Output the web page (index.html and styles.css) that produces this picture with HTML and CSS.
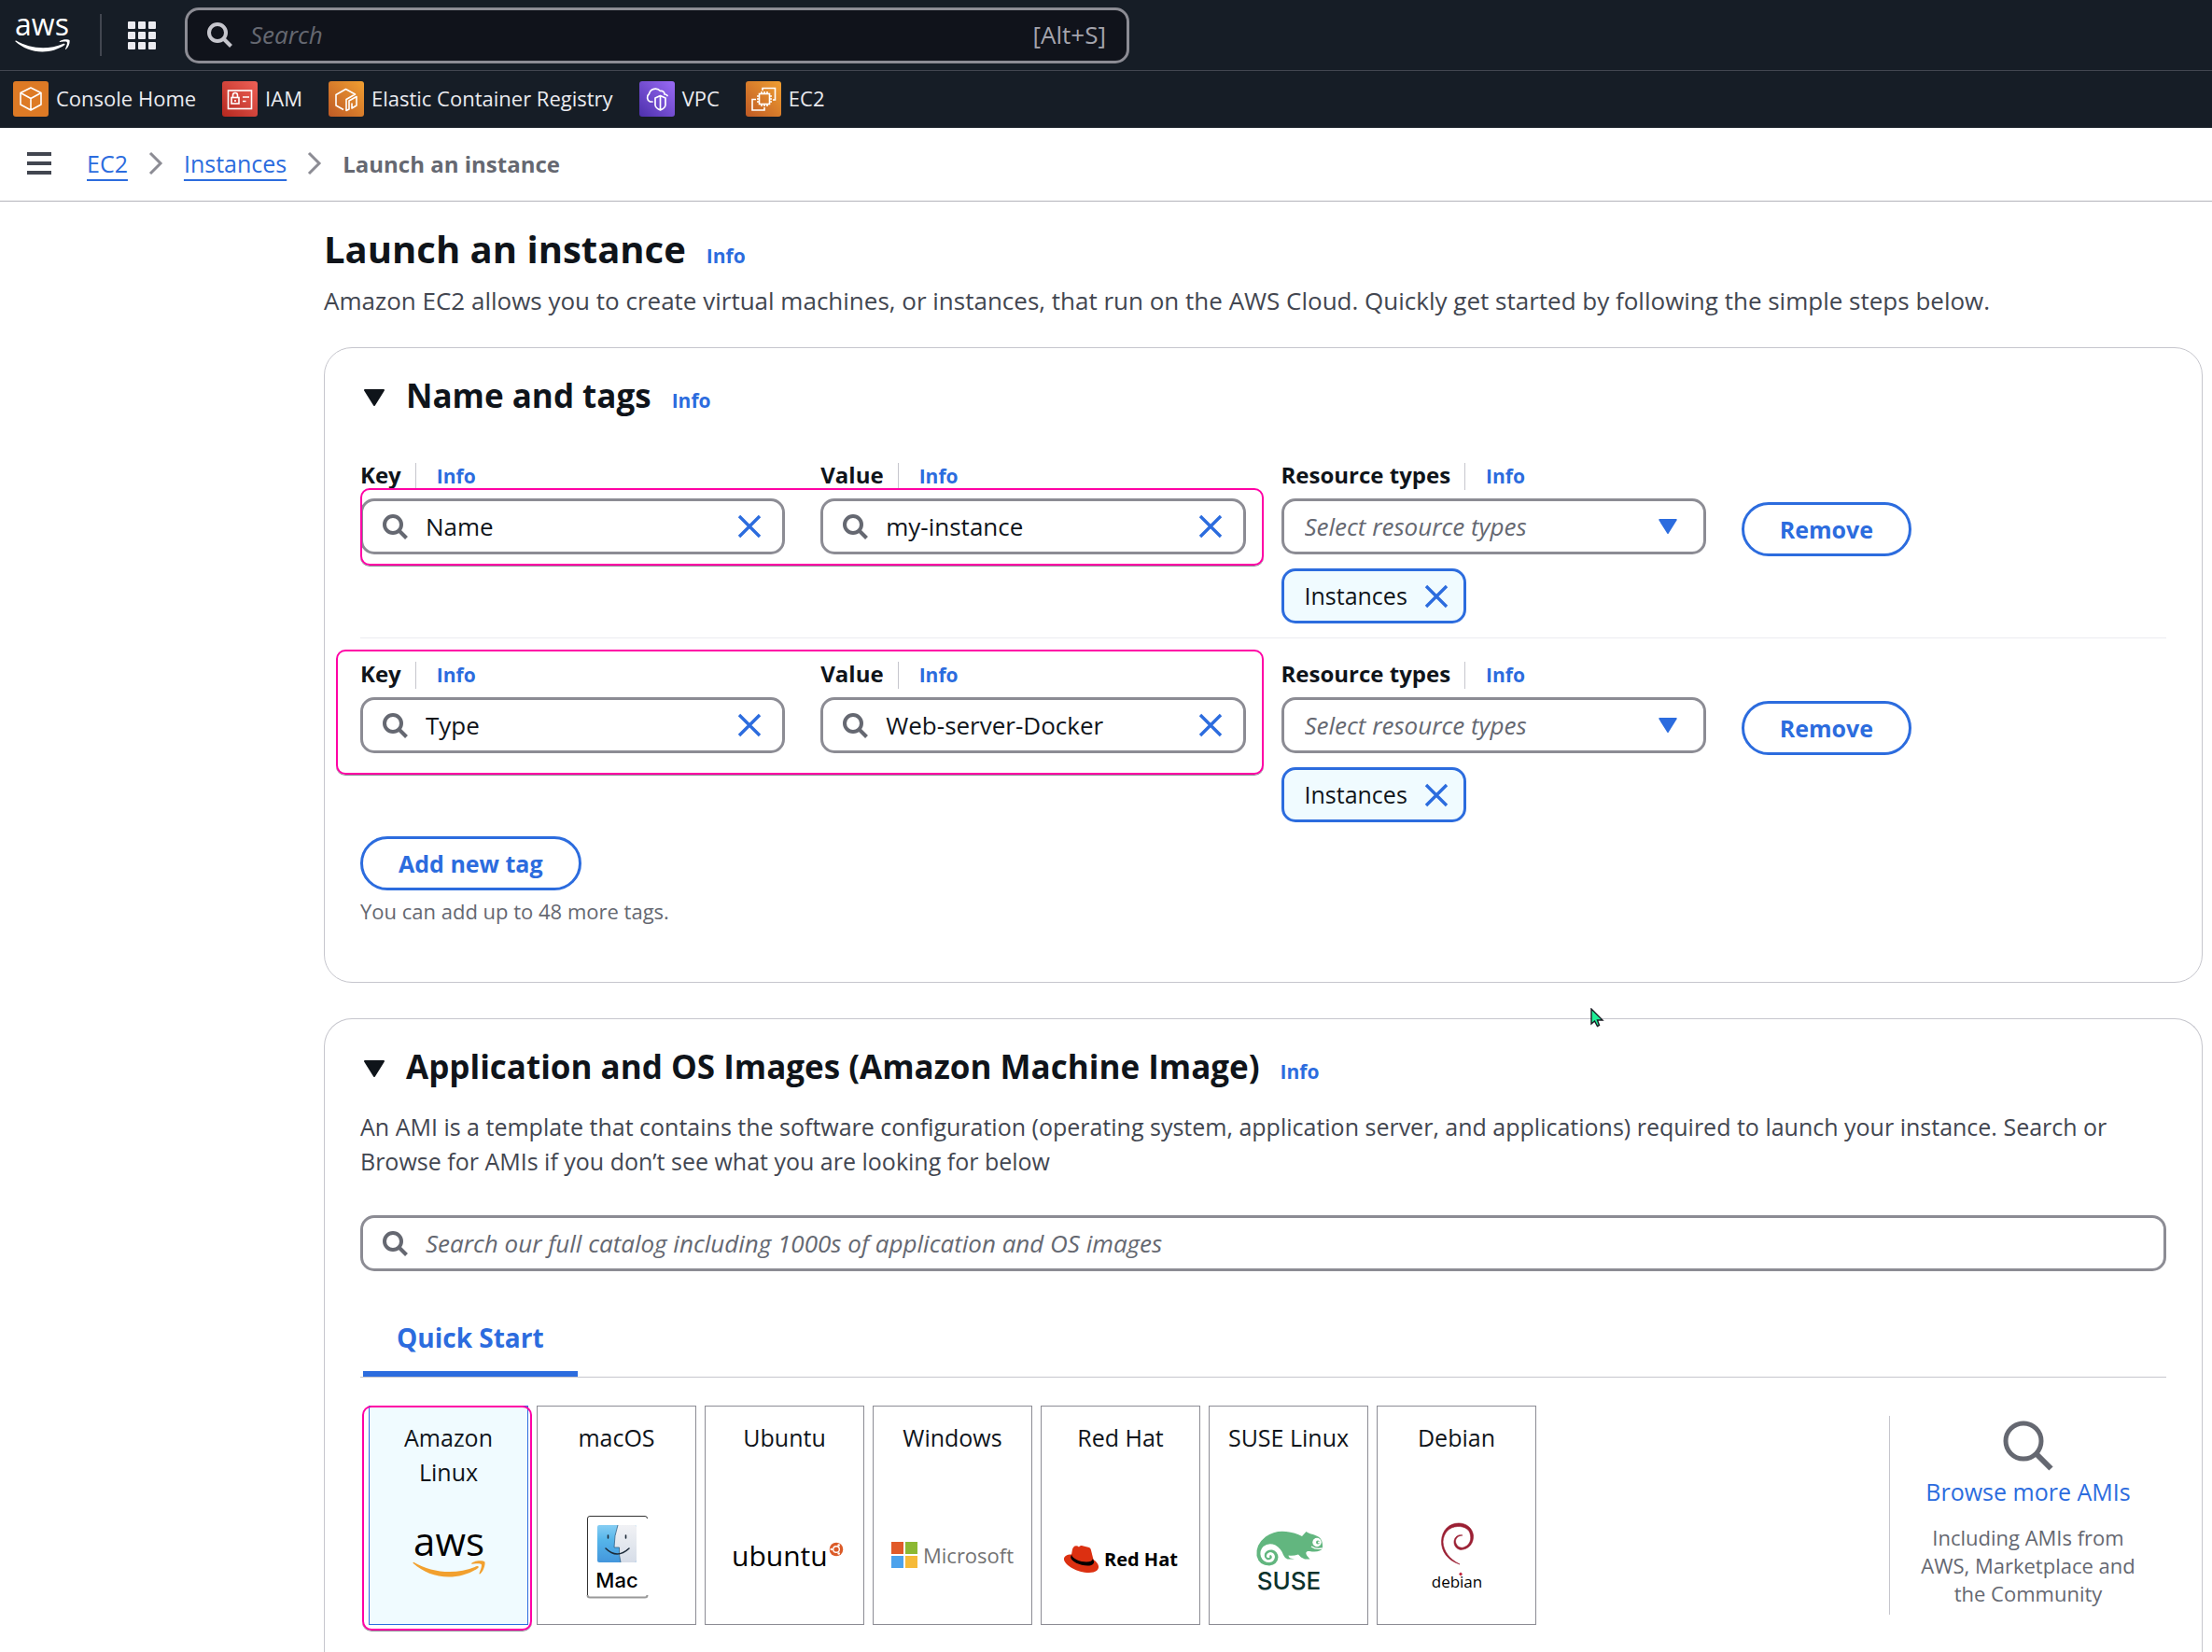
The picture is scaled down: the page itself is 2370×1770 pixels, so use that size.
FILE: index.html
```html
<!DOCTYPE html>
<html lang="en">
<head>
<meta charset="utf-8">
<meta name="viewport" content="width=device-width, initial-scale=1">
<title>Launch an instance | EC2</title>
<link rel="stylesheet" href="styles.css">
</head>
<body>
<svg class="sprite" aria-hidden="true">
  <symbol id="search" viewBox="0 0 27 27"><circle cx="11" cy="11" r="9" fill="none" stroke="currentColor" stroke-width="4"/><path d="M17.500 17.500 25.500 25.500" stroke="currentColor" stroke-width="4"/></symbol>
  <symbol id="search-large" viewBox="0 0 54 54"><circle cx="22" cy="22" r="19" fill="none" stroke="currentColor" stroke-width="5"/><path d="M35.500 35.500 51.500 51.500" stroke="currentColor" stroke-width="6"/></symbol>
  <symbol id="close" viewBox="0 0 26 26"><path d="M2 2 24 24M24 2 2 24" stroke="currentColor" stroke-width="3.400"/></symbol>
  <symbol id="caret" viewBox="0 0 24 18"><path d="M2 1H22L12 17Z" fill="currentColor" stroke="currentColor" stroke-width="2" stroke-linejoin="round"/></symbol>
  <symbol id="chevron" viewBox="0 0 16 26"><path d="M2 2 13 13 2 24" fill="none" stroke="currentColor" stroke-width="3"/></symbol>
  <symbol id="smile" viewBox="0 0 304 182">
    <path d="M273.500 143.700c-32.900 24.300-80.700 37.200-121.800 37.200-57.600 0-109.500-21.300-148.700-56.700-3.100-2.800-.3-6.600 3.400-4.400 42.400 24.600 94.700 39.500 148.800 39.500 36.500 0 76.600-7.600 113.500-23.200 5.500-2.500 10.200 3.600 4.800 7.600z"/>
    <path d="M287.200 128.100c-4.200-5.400-27.800-2.600-38.500-1.300-3.200.4-3.700-2.400-.8-4.500 18.800-13.200 49.700-9.400 53.300-5 3.600 4.500-1 35.400-18.600 50.200-2.700 2.300-5.300 1.100-4.100-1.900 4-9.900 12.900-32.200 8.700-37.500z"/>
  </symbol>
</svg>

<header class="topbar">
  <a class="home" href="#" aria-label="AWS home"><svg width="60" height="50" viewBox="0 0 60 50" fill="#fff"><text class="word-aws-small" x="29" y="32" text-anchor="middle">aws</text><use href="#smile" y="14" width="59" height="36"/></svg></a>
  <button class="services" type="button" aria-label="Services">
    <svg width="30" height="30" viewBox="0 0 30 30" fill="#ebebf0"><rect width="8" height="8" rx="1"/><rect x="11" width="8" height="8" rx="1"/><rect x="22" width="8" height="8" rx="1"/><rect y="11" width="8" height="8" rx="1"/><rect x="11" y="11" width="8" height="8" rx="1"/><rect x="22" y="11" width="8" height="8" rx="1"/><rect y="22" width="8" height="8" rx="1"/><rect x="11" y="22" width="8" height="8" rx="1"/><rect x="22" y="22" width="8" height="8" rx="1"/></svg>
  </button>
  <label class="field field-dark">
    <svg class="icon" width="27" height="27"><use href="#search"/></svg>
    <input type="search" placeholder="Search" aria-label="Search">
    <span class="shortcut">[Alt+S]</span>
  </label>
</header>

<nav class="favorites" aria-label="Favorites">
  <a href="#">
    <svg width="38" height="38" viewBox="0 0 38 38"><rect width="38" height="38" rx="3" fill="#dd7a25"/><path d="M19 7 30 12.500V25L19 31 8 25V12.500ZM8 12.500 19 18.500 30 12.500M19 18.500V31" fill="none" stroke="#fff" stroke-width="1.600" stroke-linejoin="round"/></svg>
    Console Home</a>
  <a href="#">
    <svg width="38" height="38" viewBox="0 0 38 38"><defs><linearGradient id="g-iam" x1="0" y1="1" x2="1" y2="0"><stop stop-color="#b5281f"/><stop offset="1" stop-color="#ee6157"/></linearGradient></defs><rect width="38" height="38" rx="3" fill="url(#g-iam)"/><g fill="none" stroke="#fff" stroke-width="1.600"><rect x="6.500" y="10" width="25" height="19.500"/><rect x="10" y="17.500" width="8" height="6.500"/><path d="M11.500 17.500V15a2.500 2.500 0 0 1 5 0v2.500M22 17h7M22 21.500h3.500M14 20v2"/></g></svg>
    IAM</a>
  <a href="#">
    <svg width="38" height="38" viewBox="0 0 38 38"><defs><linearGradient id="g-orange" x1="0" y1="1" x2="1" y2="0"><stop stop-color="#bf5a25"/><stop offset="1" stop-color="#f09f31"/></linearGradient></defs><rect width="38" height="38" rx="3" fill="url(#g-orange)"/><g fill="none" stroke="#fff" stroke-width="1.600" stroke-linejoin="round"><path d="M16 30.500 8 26V14.500L18.500 8.500 28.500 14 19 19.500V31.500L22 30V21L30 16.500V26L25 29V23.500"/></g></svg>
    Elastic Container Registry</a>
  <a href="#">
    <svg width="38" height="38" viewBox="0 0 38 38"><defs><linearGradient id="g-vpc" x1="0" y1="1" x2="1" y2="0"><stop stop-color="#4d30ac"/><stop offset="1" stop-color="#9a6bf5"/></linearGradient></defs><rect width="38" height="38" rx="3" fill="url(#g-vpc)"/><g fill="none" stroke="#fff" stroke-width="1.700" stroke-linecap="round" stroke-linejoin="round"><path d="M14 22H11.500A5 5 0 0 1 10.500 13.500 7 7 0 0 1 22.500 10.500 3.500 3.500 0 0 1 27 14Q29 14 30 15.500"/><path d="M22.500 15.500 28 18V25.500Q27.500 29 22.500 31 17.500 29 17 25.500V18ZM22.500 15.500V31"/></g></svg>
    VPC</a>
  <a href="#">
    <svg width="38" height="38" viewBox="0 0 38 38"><rect width="38" height="38" rx="3" fill="url(#g-orange)"/><g fill="none" stroke="#fff" stroke-width="1.600"><rect x="14.500" y="13.500" width="11" height="11"/><path d="M17 13.500V11M20 13.500V11M23 13.500V11M17 24.500V27M20 24.500V27M23 24.500V27M14.500 16H12M14.500 19H12M14.500 22H12M25.500 16H28M25.500 19H28M25.500 22H28"/><path d="M18 10V7.500H31.500V20H29M11 19.500H7V31H20V28"/></g></svg>
    EC2</a>
</nav>

<nav class="crumbs" aria-label="Breadcrumb">
  <button class="menu" type="button" aria-label="Open navigation"><svg width="26" height="24" viewBox="0 0 26 24"><path d="M0 2H26M0 12H26M0 22H26" stroke="#424650" stroke-width="4"/></svg></button>
  <a href="#">EC2</a>
  <svg class="sep" width="16" height="26"><use href="#chevron"/></svg>
  <a href="#">Instances</a>
  <svg class="sep" width="16" height="26"><use href="#chevron"/></svg>
  <b>Launch an instance</b>
</nav>

<main>
  <div class="title"><h1>Launch an instance</h1><a class="info" href="#">Info</a></div>
  <p class="lead">Amazon EC2 allows you to create virtual machines, or instances, that run on the AWS Cloud. Quickly get started by following the simple steps below.</p>

  <section class="card">
    <div class="title">
      <button class="toggle" type="button" aria-label="Collapse name and tags"><svg width="24" height="18"><use href="#caret"/></svg></button>
      <h2>Name and tags</h2><a class="info" href="#">Info</a>
    </div>

    <div class="tag-row">
      <div class="cell">
        <div class="label"><label for="key-1">Key</label><a class="info" href="#">Info</a></div>
        <div class="field"><svg class="icon" width="27" height="27"><use href="#search"/></svg><input id="key-1" value="Name"><button type="button" aria-label="Clear key"><svg width="26" height="26"><use href="#close"/></svg></button></div>
      </div>
      <div class="cell">
        <div class="label"><label for="value-1">Value</label><a class="info" href="#">Info</a></div>
        <div class="field"><svg class="icon" width="27" height="27"><use href="#search"/></svg><input id="value-1" value="my-instance"><button type="button" aria-label="Clear value"><svg width="26" height="26"><use href="#close"/></svg></button></div>
      </div>
      <div class="cell">
        <div class="label"><label for="types-1">Resource types</label><a class="info" href="#">Info</a></div>
        <div class="field field-select"><select id="types-1"><option>Select resource types</option></select><svg class="caret" width="22" height="16"><use href="#caret"/></svg></div>
        <div class="token">Instances<button type="button" aria-label="Remove Instances"><svg width="26" height="26"><use href="#close"/></svg></button></div>
      </div>
      <div class="cell cell-action"><button class="button" type="button">Remove</button></div>
      <div class="mark mark-fields"></div>
    </div>

    <div class="tag-row">
      <div class="cell">
        <div class="label"><label for="key-2">Key</label><a class="info" href="#">Info</a></div>
        <div class="field"><svg class="icon" width="27" height="27"><use href="#search"/></svg><input id="key-2" value="Type"><button type="button" aria-label="Clear key"><svg width="26" height="26"><use href="#close"/></svg></button></div>
      </div>
      <div class="cell">
        <div class="label"><label for="value-2">Value</label><a class="info" href="#">Info</a></div>
        <div class="field"><svg class="icon" width="27" height="27"><use href="#search"/></svg><input id="value-2" value="Web-server-Docker"><button type="button" aria-label="Clear value"><svg width="26" height="26"><use href="#close"/></svg></button></div>
      </div>
      <div class="cell">
        <div class="label"><label for="types-2">Resource types</label><a class="info" href="#">Info</a></div>
        <div class="field field-select"><select id="types-2"><option>Select resource types</option></select><svg class="caret" width="22" height="16"><use href="#caret"/></svg></div>
        <div class="token">Instances<button type="button" aria-label="Remove Instances"><svg width="26" height="26"><use href="#close"/></svg></button></div>
      </div>
      <div class="cell cell-action"><button class="button" type="button">Remove</button></div>
      <div class="mark mark-row"></div>
    </div>

    <button class="button" type="button">Add new tag</button>
    <p class="hint">You can add up to 48 more tags.</p>
  </section>

  <section class="card card-open">
    <div class="title">
      <button class="toggle" type="button" aria-label="Collapse images"><svg width="24" height="18"><use href="#caret"/></svg></button>
      <h2>Application and OS Images (Amazon Machine Image)</h2><a class="info" href="#">Info</a>
    </div>
    <p class="about">An AMI is a template that contains the software configuration (operating system, application server, and applications) required to launch your instance. Search or Browse for AMIs if you don’t see what you are looking for below</p>
    <label class="field">
      <svg class="icon" width="27" height="27"><use href="#search"/></svg>
      <input type="search" placeholder="Search our full catalog including 1000s of application and OS images" aria-label="Search images">
    </label>
    <div class="tabs" role="tablist"><button class="tab" type="button" role="tab" aria-selected="true">Quick Start</button></div>

    <div class="images">
      <div class="tiles">
        <button class="tile tile-selected" type="button"><span>Amazon Linux</span>
          <svg class="logo" width="140" height="100" viewBox="0 0 140 100"><text class="word-aws" x="70" y="50" text-anchor="middle">aws</text><use href="#smile" x="31" y="26" width="78" height="47" fill="#f2a02e"/></svg>
          <i class="mark mark-tile"></i>
        </button>
        <button class="tile" type="button"><span>macOS</span>
          <svg class="logo" width="140" height="100" viewBox="0 0 140 100">
            <defs><linearGradient id="g-face" x1="0" y1="0" x2="0" y2="1"><stop stop-color="#86cdf3"/><stop offset=".4" stop-color="#55b5ea"/><stop offset="1" stop-color="#4396dc"/></linearGradient><linearGradient id="g-side" x1="0" y1="0" x2="0" y2="1"><stop stop-color="#f1f2f5"/><stop offset="1" stop-color="#d6dde8"/></linearGradient></defs>
            <path d="M102.500 10Q102.500 7.500 100 7.500H41Q38.500 7.500 38.500 10V92" fill="none" stroke="#333" stroke-width="1"/>
            <path d="M38.500 92Q38.500 94.500 41 94.500H100Q102.500 94.500 102.500 92" fill="none" stroke="#999" stroke-width="2"/>
            <rect x="49" y="17" width="42" height="40" rx="2" fill="url(#g-face)"/>
            <path d="M71 17H89Q91 17 91 19V55Q91 57 89 57H74Q72 50 72.500 41H67Q67 28 71 17Z" fill="url(#g-side)"/>
            <path d="M71 17Q67 28 67 41H72.500Q72 50 74 57" fill="none" stroke="#2b5f86" stroke-width=".8"/>
            <path d="M60.500 28V31M79.500 28V31M58 42Q70 54 83 42" fill="none" stroke="#1c2a38" stroke-width="1.600" stroke-linecap="round"/>
            <text class="word-mac" x="70" y="84" text-anchor="middle">Mac</text>
          </svg>
        </button>
        <button class="tile" type="button"><span>Ubuntu</span>
          <svg class="logo" width="140" height="100" viewBox="0 0 140 100">
            <text class="word-ubuntu" x="13" y="61">ubuntu</text>
            <circle cx="125" cy="43" r="7.300" fill="#db5b28"/><circle cx="125" cy="43" r="3.300" fill="none" stroke="#fff" stroke-width="1.400"/><g fill="#fff"><circle cx="119.800" cy="43" r="1.300"/><circle cx="127.700" cy="38.500" r="1.300"/><circle cx="127.700" cy="47.500" r="1.300"/></g>
          </svg>
        </button>
        <button class="tile" type="button"><span>Windows</span>
          <svg class="logo" width="140" height="100" viewBox="0 0 140 100">
            <path d="M4 35h13v13H4z" fill="#e15a29"/><path d="M19 35h13v13H19z" fill="#8cb832"/><path d="M4 50h13v13H4z" fill="#4ca2ec"/><path d="M19 50h13v13H19z" fill="#f6ba38"/>
            <text class="word-microsoft" x="38" y="58">Microsoft</text>
          </svg>
        </button>
        <button class="tile" type="button"><span>Red Hat</span>
          <svg class="logo" width="140" height="100" viewBox="0 0 140 100">
            <path d="M17 48.500C12 48.500 8.500 50.500 9 54 10 60 23 68 36 68 43 68 46.500 65 46 61 45.500 58 43.500 56 40.500 54L38 44C37.500 41.500 36.500 41 34 40.500L28 39Q26 38.500 25 40.500 23 38.500 20.500 39.500 18.500 40.500 18 43Z" fill="#dc3011"/>
            <path d="M17 48.500 16.200 51.500C16.500 56 26 60.500 34.500 60.500 39 60.500 41.500 58.500 41 56L40 53C39.500 55.500 37 56.500 33 56.500 26 56.500 18 53 17 48.500Z" fill="#000"/>
            <text class="word-redhat" x="52" y="61">Red Hat</text>
          </svg>
        </button>
        <button class="tile" type="button"><span>SUSE Linux</span>
          <svg class="logo" width="140" height="100" viewBox="0 0 140 100">
            <path d="M88.500 24C91 26.500 98 27 101.500 29.500 105.500 32 106.500 37 106 42 104.500 45 99 46.500 92 45 88 44.500 87.500 47 89.500 50L92.500 53.500H87L83 51.500 80 48.500Q74 50.500 69.500 49.500 69.500 51.500 71.500 52.500L76 53.500H68.500Q65.500 52.500 64 49 61.500 42 55.500 38.500 48 35.500 42.500 40 38 44.500 40 51 42.500 57 49 57 54.500 56.500 55 51 54.500 46.500 50 46 45.500 47 46 51 47.500 53 49.500 51.500 48.500 49.500 50 49 52.500 50 51.500 52.500 49.500 55 46.500 54 43 52 44 47.500 46.500 43 52 43.500 58 45 58.500 51.500 58 59 49 60.500 38 60.500 35.500 50 34 38 45 29.500 55 22.500 67 24 77 25 84 29 87.500 30Q87.500 27 88.500 24Z" fill="#62b67f"/>
            <circle cx="100" cy="35.500" r="4.700" fill="#fff"/><circle cx="101" cy="35.500" r="2" fill="#62b67f"/><circle cx="102" cy="35.500" r="1" fill="#fff"/><path d="M94 40Q99 43.500 106 42" fill="none" stroke="#fff" stroke-width="1.300"/>
            <text class="word-suse" x="70" y="86" text-anchor="middle">SUSE</text>
          </svg>
        </button>
        <button class="tile" type="button"><span>Debian</span>
          <svg class="logo" width="140" height="100" viewBox="0 0 140 100">
            <path d="M73 59C60 55 53 45 53.500 34 54 22 62 15 72 15 80 15 86.500 20 87.500 28 88 37 82.500 43 74 43.500 69 42.500 66.500 38.500 67 34 68 29 71.500 27 76 28 71.500 28.500 68.500 30.500 68.500 35 69.500 39.500 73 42 77 41 83 39 85.500 34 84.500 28 83.500 21 78 18.500 71 18.500 61 19 55.500 26 55 35 55.500 45 62 53.500 73 59Z" fill="#9b1f33" stroke="#9b1f33" stroke-width=".6"/>
            <text class="word-debian" x="70" y="84" text-anchor="middle">debian</text>
            <path d="M74 67.500 76 69.500 74 71.500 72 69.500Z" fill="#c0203a"/>
          </svg>
        </button>
      </div>
      <aside class="browse">
        <svg width="54" height="54"><use href="#search-large"/></svg>
        <a href="#">Browse more AMIs</a>
        <p>Including AMIs from AWS, Marketplace and the Community</p>
      </aside>
    </div>
  </section>

  <svg class="cursor" width="15" height="21" viewBox="0 0 15 21" aria-hidden="true"><path d="M1 1V17L4.500 14 7.500 19.500 9.500 18.500 7.500 13H13Z" fill="#1fee96" stroke="#1a1a22" stroke-width="1.400"/></svg>
</main>
</body>
</html>
```
FILE: styles.css
```css
:root {
  --ink: #0f141a;
  --body: #424650;
  --muted: #656871;
  --blue: #2c6cde;
  --line: #c6c6cd;
  --control: #8c8c94;
  --pink: #ff00a5;
}

* { box-sizing: border-box; }

body {
  display: flex;
  flex-direction: column;
  min-height: 100vh;
  margin: 0;
  background: #fff;
  color: var(--ink);
  font: 26px/37px "Open Sans", "Noto Sans", sans-serif;
}

h1, h2, p { margin: 0; }
h1 { font-size: 40px; line-height: 54px; }
h2 { font-size: 35px; line-height: 46px; }
a { color: var(--blue); text-decoration: none; }
svg { display: block; flex: none; }
button, input, select { font: inherit; color: inherit; }
button { padding: 0; border: 0; background: none; color: var(--blue); }
.sprite { position: absolute; width: 0; height: 0; }

/* Top bar */
.topbar {
  display: flex;
  align-items: center;
  height: 76px;
  padding-left: 16px;
  border-bottom: 1px solid #424650;
  background: #161d26;
}
.home { height: 64px; padding-right: 31px; }
.services {
  display: flex;
  align-items: center;
  height: 45px;
  margin-right: 31px;
  padding-left: 28px;
  border-left: 2px solid #424650;
}
.field-dark {
  flex: 0 1 1012px;
  height: 57px;
  padding-right: 11px;
  border-color: #656871;
  background: #10131b;
  color: #b4b4bb;
}
.field-dark .icon { color: #c6c6cd; }
.field-dark input::placeholder, .shortcut { color: #a4a4ad; }

.favorites {
  display: flex;
  align-items: center;
  gap: 28px;
  height: 61px;
  padding: 0 0 2px 14px;
  background: #161d26;
  font-size: 22px;
}
.favorites a { display: flex; align-items: center; gap: 8px; color: #ebebf0; }

.crumbs {
  display: flex;
  align-items: center;
  gap: 22px;
  height: 79px;
  padding: 0 0 2px 29px;
  border-bottom: 1px solid #b4b4bb;
  font-size: 25px;
}
.crumbs a {
  text-decoration: underline;
  text-decoration-thickness: 2px;
  text-underline-offset: 7px;
}
.crumbs b { color: var(--muted); font-size: 24px; }
.menu { margin-right: 16px; }
.sep { color: var(--control); }

/* Page */
main {
  position: relative;
  display: flex;
  flex: 1;
  flex-direction: column;
  padding: 24px 10px 0 347px;
}
.title { display: flex; align-items: baseline; gap: 22px; }
.info { font-size: 21px; font-weight: 700; }
.lead { margin: 10px 0 31px; color: var(--body); }

.card {
  padding: 28px 38px 61px;
  border: 1px solid var(--line);
  border-radius: 30px;
}
.card-open {
  flex: 1;
  margin-top: 38px;
  padding-bottom: 29px;
  border-bottom: 0;
  border-radius: 30px 30px 0 0;
}
.toggle { padding: 0 0 2px 3px; color: var(--ink); }

/* Form controls */
.field {
  display: flex;
  align-items: center;
  gap: 19px;
  height: 60px;
  padding: 0 22px 0 21px;
  border: 3px solid var(--control);
  border-radius: 15px;
}
.field input {
  flex: 1;
  min-width: 0;
  height: 37px;
  padding: 0;
  border: 0;
  outline: 0;
  background: none;
}
.field input::placeholder { color: var(--muted); font-style: italic; opacity: 1; }
.icon { color: var(--muted); }
.field-select { position: relative; padding: 0; color: var(--muted); }
.field-select select {
  width: 100%;
  height: 100%;
  padding: 0 60px 0 22px;
  border: 0;
  outline: 0;
  background: none;
  appearance: none;
  font-style: italic;
}
.caret {
  position: absolute;
  right: 27px;
  color: var(--blue);
  pointer-events: none;
}

.button {
  height: 58px;
  padding: 0 38px;
  border: 3px solid var(--blue);
  border-radius: 29px;
  font-size: 25px;
  font-weight: 700;
}

.tag-row {
  position: relative;
  display: grid;
  grid-template-columns: repeat(4, minmax(0, 1fr));
  column-gap: 38px;
  padding: 23px 0 15px;
}
.title + .tag-row { margin-top: 23px; border-bottom: 1px solid #ebebf0; }
.label {
  display: flex;
  align-items: baseline;
  gap: 15px;
  height: 29px;
  margin-bottom: 11px;
  font-size: 24px;
  font-weight: 700;
  line-height: 29px;
}
.label .info { padding-left: 22px; border-left: 1px solid var(--line); }
.cell-action { padding-top: 44px; }
.token {
  display: flex;
  align-items: center;
  gap: 18px;
  width: fit-content;
  height: 59px;
  margin-top: 15px;
  padding: 0 16px 0 22px;
  border: 3px solid var(--blue);
  border-radius: 15px;
  background: #f0fbff;
  font-size: 25px;
}
.hint { margin-top: 7px; color: var(--muted); font-size: 22px; line-height: 30px; }

/* Pink outlines drawn over the form */
.mark {
  position: absolute;
  border: 2px solid var(--pink);
  border-radius: 10px;
  box-shadow: 0 1px 0 #8c8c94;
  pointer-events: none;
}
.mark-fields { top: 52px; left: 0; width: 50%; height: 83px; }
.mark-row { top: 12px; left: -26px; width: calc(50% + 26px); height: 134px; }
.mark-tile { top: -1px; left: -8px; width: 182px; height: 241px; }

/* Images */
.about { margin: 22px 0 39px; color: var(--body); font-size: 25px; }
.tabs {
  display: flex;
  margin-top: 38px;
  padding-left: 3px;
  border-bottom: 1px solid var(--line);
}
.tab {
  padding: 13px 36px 16px;
  border-bottom: 6px solid var(--blue);
  border-radius: 3px 3px 0 0;
  font-size: 28px;
  font-weight: 700;
  line-height: 40px;
}
.images {
  display: flex;
  align-items: flex-start;
  justify-content: space-between;
  margin-top: 30px;
  padding-left: 9px;
}
.tiles { display: flex; gap: 9px; }
.tile {
  position: relative;
  display: flex;
  flex-direction: column;
  align-items: center;
  justify-content: space-between;
  width: 171px;
  height: 235px;
  padding: 15px 14px 23px;
  border: 1px solid var(--control);
  color: var(--ink);
  font-size: 25px;
}
.tile-selected { border-color: var(--blue); background: #f0fbff; }
.word-aws, .word-aws-small { font-weight: 500; }
.word-aws { font-size: 42px; }
.word-aws-small { font-size: 32px; }
.word-mac { font: 500 22px Inter, sans-serif; }
.word-ubuntu { font-size: 30px; }
.word-microsoft { fill: #737373; font-size: 22px; font-weight: 500; }
.word-redhat { font-size: 20px; font-weight: 700; }
.word-suse { fill: #0c322c; font: 500 26px Inter, sans-serif; }
.word-debian { font-size: 17px; font-weight: 500; }

.browse {
  display: flex;
  flex-direction: column;
  align-items: center;
  width: 297px;
  margin-top: 11px;
  padding: 5px 30px 8px;
  border-left: 1px solid var(--line);
  color: var(--muted);
  text-align: center;
}
.browse a { margin: 4px 0 15px; font-size: 25px; white-space: nowrap; }
.browse p { font-size: 22px; line-height: 30px; }

.cursor { position: absolute; top: 864px; left: 1704px; }
```
